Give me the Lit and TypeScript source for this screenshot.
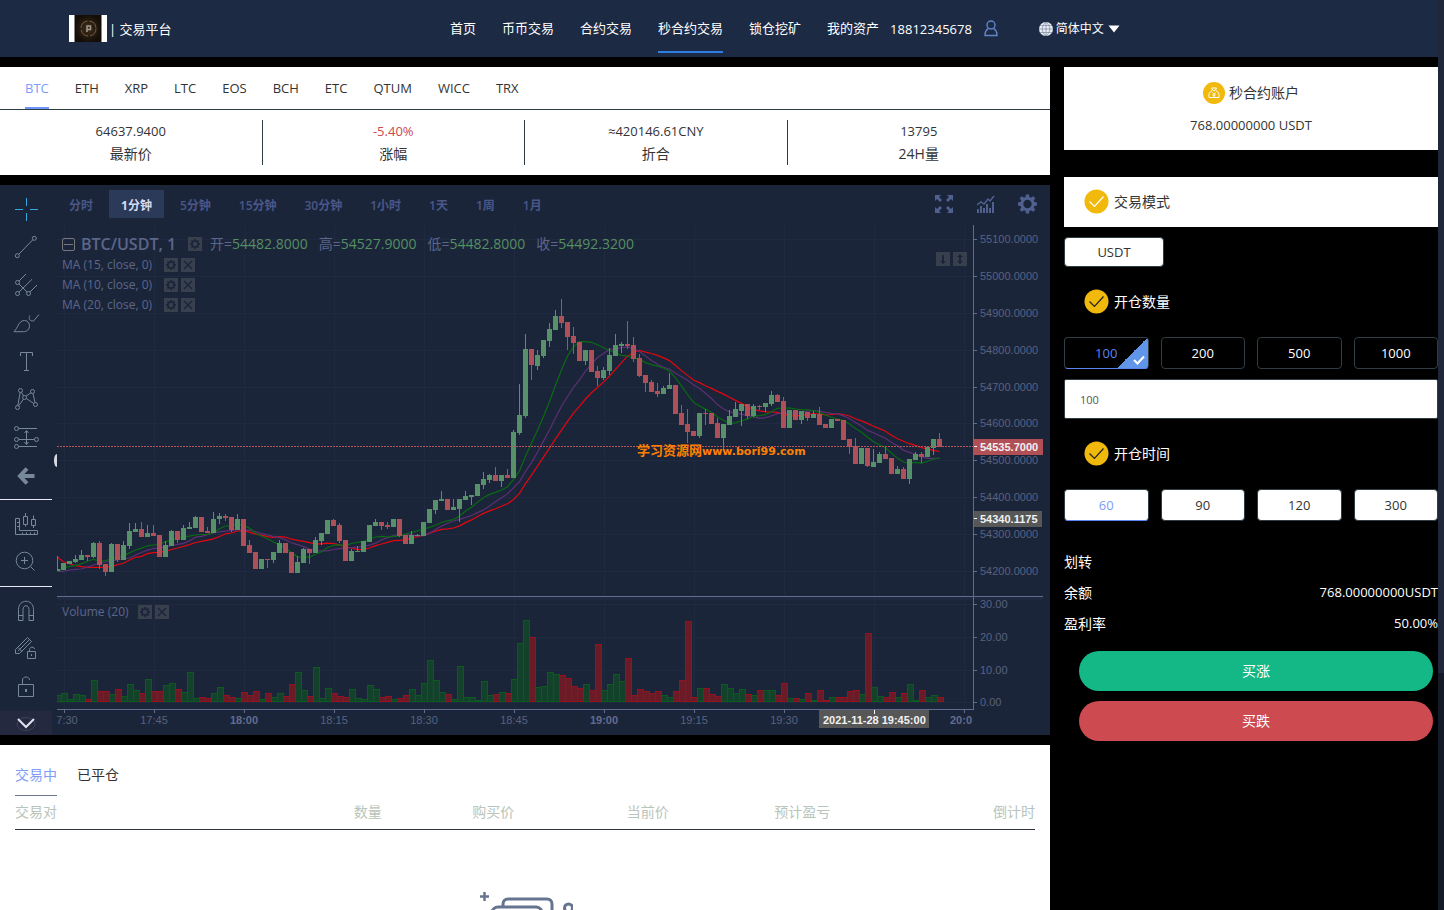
import { LitElement, html, svg, css } from 'lit';
import { customElement, property, state } from 'lit/decorators.js';
import { classMap } from 'lit/directives/class-map.js';

// u = up, d = down, followed by high, body top, body bottom, low.
// Values are ticks (3 per pixel) counted down from the base of each batch.
const BATCHES = [
  {
    base: 570,
    rows: `u258,297,302,302 u279,279,300,300 u272,273,281,282 u254,266,276,278 u239,255,269,270 d255,255,260,272
      u216,219,261,264 d213,219,284,297 d281,281,305,318 u219,222,305,305 d222,222,269,276 u213,225,269,269
      u159,183,227,236 u159,177,185,186 d156,177,200,201 u165,189,200,201 d165,189,197,198 d195,195,260,261
      u213,225,260,261 u180,183,227,227 d183,183,209,218 u165,174,209,210 u156,171,176,177 u138,141,173,174
      d141,141,185,186 d171,183,188,189 u126,147,188,189 u129,138,147,162 d132,138,143,153 d141,141,179,186
      u132,147,179,180 d147,147,227,228 d210,225,248,249 d246,246,296,297 u267,267,296,297 d267,267,269,294
      u246,246,269,279 u210,219,248,249 d219,219,248,249 d246,246,308,309 u258,276,308,309 u234,237,278,279
      d237,237,248,282 u201,210,248,249 u189,189,212,224 u150,150,191,192 d147,150,167,168 d159,165,212,218
      d210,210,272,273 u237,243,272,273 u228,243,245,246 u213,213,245,246`,
  },
  {
    base: 0,
    rows: `u735,735,785,786 u717,726,738,738 d726,726,738,750 d726,735,741,747 u717,717,741,741 d717,717,767,770
      d765,765,791,792 u753,765,791,792 u762,765,768,768 u726,726,767,768 u687,687,728,729 u660,660,690,702
      u633,657,663,663 d657,657,689,690 u657,681,689,690 u657,657,686,726 u633,648,659,660 u645,645,651,675
      u612,612,647,648 u576,597,614,627 u582,585,599,609 d561,585,602,603 u585,585,602,621 d567,585,593,594
      u450,456,593,594 u312,405,459,465 u162,207,407,414 d207,207,254,300 u210,225,257,270 u180,180,227,234
      u129,147,182,201 u90,108,149,150 d57,108,128,144 d126,126,170,210 d141,168,188,222 d186,186,242,243
      u210,210,242,255 d210,210,275,276 d258,273,293,318 u261,270,293,300 u204,225,272,285 u162,195,227,228
      u186,192,197,219 d123,192,197,207 d171,195,236,246 d222,234,287,291 d285,285,308,336 d300,306,335,336
      d309,333,341,351 u318,324,341,342 u279,315,326,327 d315,315,401,402 d375,399,434,435`,
  },
  {
    base: 60,
    rows: `d327,372,395,428 d393,393,407,408 u339,339,407,414 d327,339,341,375 d339,339,371,372 d354,369,413,414
      u372,372,413,453 u330,348,374,375 u306,327,350,351 u312,312,332,378 d312,312,347,357 u312,318,347,351
      d315,318,321,330 u309,309,320,335 u273,285,311,318 d282,285,305,306 d291,303,383,384 u330,330,383,384
      d330,330,359,360 u333,333,359,372 d335,335,353,362 u333,342,353,354 d321,342,374,375 d372,372,383,384
      u357,357,383,384 d357,357,362,363 d360,360,419,420 d417,417,440,462 d414,438,491,492 u444,444,491,492
      d444,444,497,500 u447,486,500,501 u456,462,488,489 d441,462,476,477 d474,474,521,522 u498,507,521,522
      d501,507,536,537 u477,477,536,552 u456,462,479,480 d456,462,470,489 u441,441,470,471 u417,417,443,465
      d399,417,440,440`,
  },
];

const VOLUMES = [
  19, 25, 5, 22, 19, 7, 64, 31, 31, 22, 37, 16, 52, 34, 25, 67, 31, 31, 49, 55, 37, 28, 88, 10, 13, 10, 25, 43, 19, 13,
  10, 28, 19, 31, 7, 25, 13, 25, 16, 52, 88, 34, 16, 103, 10, 40, 25, 16, 13, 37, 10, 7, 49, 37, 13, 16, 7, 10, 19, 37,
  19, 55, 124, 64, 28, 22, 7, 106, 13, 13, 4, 61, 19, 22, 28, 25, 67, 175, 244, 193, 43, 46, 88, 82, 79, 70, 46, 40, 52,
  34, 172, 34, 52, 82, 61, 130, 19, 37, 31, 25, 31, 19, 13, 31, 64, 241, 13, 40, 40, 22, 16, 52, 40, 25, 37, 22, 19, 34,
  34, 34, 19, 55, 10, 10, 7, 25, 4, 34, 4, 13, 13, 13, 31, 34, 22, 205, 43, 16, 13, 28, 13, 25, 52, 4, 34, 13, 19, 13,
];

interface Candle {
  up: boolean;
  high: number;
  top: number;
  bottom: number;
  low: number;
}

const CANDLES: Candle[] = BATCHES.flatMap(({ base, rows }) =>
  rows.trim().split(/\s+/).map(row => {
    const [high, top, bottom, low] = row.slice(1).split(',').map(v => Number(v) + base);
    return { up: row[0] === 'u', high, top, bottom, low };
  })
);

// The averages need values from before the first visible candle, so each one starts with a lead-in
const AVERAGES = [
  {
    period: 20,
    color: '#e4060f',
    lead: [832, 845, 851, 857, 860, 862, 862, 862, 861, 860, 854, 850, 840, 832, 829, 821, 818, 817, 814],
  },
  {
    period: 15,
    color: '#5d2f73',
    lead: [874, 874, 870, 868, 867, 861, 855, 849, 846, 843, 840, 837, 834, 825],
  },
  { period: 10, color: '#086b12', lead: [874, 865, 859, 856, 851, 844, 838, 843, 842] },
];

const PRICES = [
  ['55100.0000', 14], ['55000.0000', 51], ['54900.0000', 88], ['54800.0000', 125], ['54700.0000', 162],
  ['54600.0000', 198], ['54500.0000', 235], ['54400.0000', 272], ['54300.0000', 309], ['54200.0000', 346],
  ['30.00', 379], ['20.00', 412], ['10.00', 445], ['0.00', 477],
] as [string, number][];

// Label and its centre; the one under the time tag stays empty
const TIMES = [
  ['7:30', 10], ['17:45', 97], ['18:00', 187], ['18:15', 277], ['18:30', 367], ['18:45', 457],
  ['19:00', 547], ['19:15', 637], ['19:30', 727], ['', 817], ['20:0', 904],
] as [string, number][];

const tickY = (v: number) => Math.round(55 + v / 3);

const GEAR = svg`
  <path fill-rule="evenodd" d="M8.4 0h3.2l.5 2.7 1.6.7L16 1.8 18.2 4l-1.6 2.3.7 1.6 2.7.5v3.2l-2.7.5-.7 1.6
    1.6 2.3-2.2 2.2-2.3-1.6-1.6.7-.5 2.7H8.4l-.5-2.7-1.6-.7L4 18.2 1.8 16l1.6-2.3-.7-1.6L0 11.6V8.4l2.7-.5.7-1.6
    L1.8 4 4 1.8l2.3 1.6 1.6-.7zM10 5.6a4.4 4.4 0 1 0 0 8.8 4.4 4.4 0 0 0 0-8.8z"/>`;

const TOOLS: Record<string, unknown> = {
  cross: svg`<path d="M3 14.5h8M18 14.5h8M14.5 3v8M14.5 18v8"/>`,
  trend: svg`<circle cx="22.3" cy="5.3" r="2"/><circle cx="5.3" cy="22.7" r="2"/><path d="M6.8 21.2L20.8 6.8"/>`,
  fork: svg`<circle cx="5.5" cy="11.5" r="2"/><circle cx="5.5" cy="22.5" r="2"/><circle cx="16.5" cy="22.5" r="2"/>
    <path d="M7 10l7-7M7 21L20 8.3M18 21l7-7M7 13l8 8"/>`,
  brush: svg`<path d="M2 22.7C6 19 6.5 11.5 12.5 11.5c3 0 5 2.5 5 5.2 0 3.5-2.5 6-6 6z"/>
    <path d="M18 6.5c-2 3 0 6 3.5 5.5L27 5.5"/>`,
  text: svg`<path d="M8.5 9V5.5h12V9M14.5 5.5v18M12 23.5h5"/>`,
  pattern: svg`<circle cx="8.5" cy="5.5" r="2"/><circle cx="20.5" cy="6.5" r="2"/><circle cx="12.5" cy="12.5" r="2"/>
    <circle cx="5.5" cy="22.5" r="2"/><circle cx="23.5" cy="19.5" r="2"/>
    <path d="M5.8 20.5l2.4-13M9.5 7.3l2 3.5M14 11.2l5-3.5M21 8.5l2 9M6.7 20.8l4.7-6.6M14.3 13.5l7.5 5"/>`,
  forecast: svg`<circle cx="4.5" cy="5.5" r="2"/><circle cx="4.5" cy="16.5" r="2"/><circle cx="24.5" cy="16.5" r="2"/>
    <circle cx="4.5" cy="23.5" r="2"/>
    <path d="M6.5 5.5H25M6.5 16.5h16M6.5 23.5H25M14.5 8v13M12.5 10l2-2.5 2 2.5M12.5 19l2 2.5 2-2.5"/>`,
  back: svg`<path stroke-width="4" d="M15 7.5L8 15l7 7.5M9 15h13.5"/>`,
  ruler: svg`<path d="M3.5 8.5h4v12h18v4h-22zM5 12.5h2M5 16.5h2M10.5 22.5v2M14.5 22.5v2M18.5 22.5v2M22.5 22.5v2"/>
    <path d="M11.5 6.5h4v8h-4zM13.5 3v3.5M13.5 14.5v2M19.5 9.5h4v6h-4zM21.5 5.5v4M21.5 15.5v2.5"/>`,
  zoom: svg`<circle cx="12.5" cy="12.5" r="8.3"/><path d="M18.5 18.5l4 4M9 12.5h7M12.5 9v7"/>`,
  magnet: svg`<path d="M6.5 23.5v-11c0-11 15-11 15 0v11H17v-11c0-5-6-5-6 0v11zM6.5 18.5H11M17 18.5h4.5"/>`,
  pencil: svg`<path d="M3.5 14.5L15.5 2.5l4 4-12 12h-4zM6 12.5l4 4M6 16L17 5"/>
    <path d="M15.5 16.5h8v7h-8zM17.5 16.5v-2c0-3 5-3 5-.5M19.5 19v2"/>`,
  lock: svg`<path d="M6.5 11.5h15v12h-15zM10.5 11.5V7c0-4 7-4 7 0"/><path stroke-width="2" d="M14 16v3"/>`,
};

@customElement('market-chart')
export class MarketChart extends LitElement {
  @state() private period = '1分钟';

  static styles = css`
    :host {
      display: flex;
      background: #1b253a;
      color: #5c668a;
      font-size: 12px;
    }

    button {
      border: 0;
      padding: 0;
      background: none;
      color: inherit;
      font: inherit;
      cursor: pointer;
      display: flex;
      align-items: center;
      justify-content: center;
    }

    .tools {
      width: 52px;
      flex: none;
      display: flex;
      flex-direction: column;
      padding-top: 5px;
      color: #77879c;
      position: relative;
    }

    .tools__item {
      width: 52px;
      height: 38px;
    }

    .tools__item--active {
      color: #35a9de;
    }

    .tools__icon {
      width: 28px;
      height: 28px;
      fill: none;
      stroke: currentColor;
      stroke-width: 1;
    }

    .tools__line {
      height: 1px;
      margin: 5px 0;
      background: #e6ebf5;
    }

    .tools__more {
      height: 24px;
      margin-top: 5px;
      background: #242940;
      color: #dfe3ec;
    }

    .tools__collapse {
      position: absolute;
      right: -5px;
      top: 269px;
      width: 3px;
      height: 13px;
      background: #d5d8de;
      border-radius: 3px 0 0 3px / 6px 0 0 6px;
    }

    .body {
      flex: 1;
      min-width: 0;
      padding-left: 5px;
    }

    .bar {
      display: flex;
      align-items: flex-start;
      gap: 4px;
      height: 35px;
      padding-top: 5px;
    }

    .bar__period {
      height: 28px;
      padding: 3px 12px 0;
      color: #4a5788;
      line-height: 25px;
      font-weight: 600;
    }

    .bar__period--active {
      background: #2c3a5a;
      color: #d5dcf0;
      font-weight: 700;
    }

    .bar__actions {
      margin-left: auto;
      padding: 4px 13px 0 0;
      display: flex;
      gap: 23px;
      color: #50608f;
      fill: currentColor;
    }

    .plot {
      position: relative;
    }

    .plot__canvas {
      display: block;
      width: 100%;
      height: auto;
      font: 11px 'Liberation Sans', Arial, sans-serif;
    }

    .plot__label {
      fill: #58617f;
    }

    .plot__label--strong {
      font-weight: 700;
      fill: #626c8e;
    }

    .plot__tag {
      fill: #f2f2f2;
      font-weight: 700;
    }

    .plot__watermark {
      fill: #ff8000;
      font: 700 13px 'DejaVu Sans', 'Noto Sans CJK SC', sans-serif;
    }

    .plot__site {
      font-size: 11px;
    }

    .legend {
      position: absolute;
      left: 5px;
      top: 8px;
      line-height: 20px;
    }

    .legend--volume {
      top: 377px;
    }

    .legend__row {
      display: flex;
      align-items: center;
      gap: 3px;
    }

    .legend__label {
      margin-right: 9px;
    }

    .legend--volume .legend__label {
      margin-right: 6px;
    }

    .legend__row--title {
      height: 22px;
    }

    .legend__fold {
      width: 13px;
      height: 13px;
      border: 1px solid #77777c;
      border-radius: 2px;
      box-sizing: border-box;
      margin-right: 3px;
    }

    .legend__fold::before {
      content: '';
      width: 9px;
      height: 1px;
      background: #77777c;
    }

    .legend__title {
      font-size: 16px;
      font-weight: 600;
      margin-right: 9px;
    }

    .legend__ohlc {
      font-size: 14px;
      margin: 0 3px 0 5px;
    }

    .legend__ohlc b {
      color: #558f62;
      font-weight: 400;
    }

    .mini {
      width: 14px;
      height: 14px;
      background: #383f4d;
      color: #1b253a;
      fill: currentColor;
    }

    .plot__moves {
      position: absolute;
      right: 83px;
      top: 27px;
      display: flex;
      gap: 3px;
    }
  `;

  private tool(name: string, label: string) {
    return html`
      <button class="tools__item ${classMap({ 'tools__item--active': name === 'cross' })}" aria-label=${label}>
        <svg class="tools__icon" viewBox="0 0 28 28">${TOOLS[name]}</svg>
      </button>
    `;
  }

  private mini(kind: string) {
    const icons: Record<string, unknown> = {
      gear: svg`<svg viewBox="0 0 20 20" x="2" y="2" width="10" height="10">${GEAR}</svg>`,
      close: svg`<path d="M3 3l8 8M11 3l-8 8" stroke="currentColor" stroke-width="1.5"/>`,
      down: svg`<path d="M6 3h2v6h2l-3 3-3-3h2z"/>`,
      both: svg`<path d="M6 5H4l3-3 3 3H8v4h2l-3 3-3-3h2z"/>`,
    };
    return html`<button class="mini" aria-label=${kind}><svg width="14" height="14">${icons[kind]}</svg></button>`;
  }

  private candle(c: Candle, i: number) {
    const top = tickY(c.top);
    const high = tickY(c.high);
    return svg`
      <g fill=${c.up ? '#58906a' : '#ad5057'}>
        <rect x=${i * 6} y=${high} width="1" height=${Math.max(1, tickY(c.low) - high)} />
        <rect x=${i * 6 - 2} y=${top} width="5" height=${Math.max(1, tickY(c.bottom) - top)} />
      </g>
    `;
  }

  private volume(v: number, i: number) {
    const h = Math.round(v / 3);
    const up = CANDLES[i]?.up;
    return svg`
      <rect x=${i * 6 - 1.5} y=${476.5 - h} width="6" height=${h}
        fill=${up ? '#12432a' : '#6b1a26'} stroke=${up ? '#0c5a1c' : '#97101c'} />
    `;
  }

  private average(period: number, lead: number[]) {
    const closes = CANDLES.map(c => (c.up ? c.top : c.bottom));
    return closes
      .map((_, i) => {
        const value = i < period - 1
          ? lead[i]
          : closes.slice(i - period + 1, i + 1).reduce((a, b) => a + b, 0) / period;
        return `${i * 6 + 0.5},${(55 + value / 3).toFixed(1)}`;
      })
      .join(' ');
  }

  private renderPlot() {
    return html`
      <svg class="plot__canvas" viewBox="0 0 993 510">
        <g stroke="#1f2940">
          ${PRICES.map(([, y]) => svg`<path d="M0 ${y + 0.5}H916" />`)}
          ${TIMES.map((_, i) => svg`<path d="M${i * 90 + 7.5} 0V484" />`)}
        </g>
        <rect y="372" width="986" height="3" fill="#1f2940" />
        <svg width="916" height="510">
          <g shape-rendering="crispEdges">${VOLUMES.map((v, i) => this.volume(v, i))}</g>
          <g fill="none" stroke-width="1.2">
            ${AVERAGES.map(a => svg`<polyline points=${this.average(a.period, a.lead)} stroke=${a.color} />`)}
          </g>
          <g shape-rendering="crispEdges">${CANDLES.map((c, i) => this.candle(c, i))}</g>
        </svg>
        <g text-anchor="middle">
          ${TIMES.filter(([t]) => t).map(([t, x]) => svg`
            <text class="plot__label ${/:00?$/.test(t) ? 'plot__label--strong' : ''}" x=${x} y="499">${t}</text>
          `)}
        </g>
        <path d="M0 221.5H916" stroke="#b8535a" stroke-dasharray="2 1" />
        <text class="plot__watermark" x="580" y="230">学习资源网<tspan class="plot__site">www.bori99.com</tspan></text>
        <g stroke="#626c8e" fill="none" shape-rendering="crispEdges">
          <path d="M0 371.5H986M916.5 0V484.5M0 484.5H917" />
          ${PRICES.map(([, y]) => svg`<path d="M917 ${y + 0.5}h3" />`)}
          ${TIMES.map((_, i) => svg`<path d="M${i * 90 + 7.5} 485v3" />`)}
        </g>
        ${PRICES.map(([label, y]) => svg`<text class="plot__label" x="923" y=${y + 4}>${label}</text>`)}
        <rect x="917" y="214" width="69" height="16" fill="#b04f56" />
        <text class="plot__tag" x="923" y="226">54535.7000</text>
        <rect x="917" y="286" width="68" height="16" fill="#575757" />
        <text class="plot__tag" x="923" y="298">54340.1175</text>
        <rect x="762" y="485" width="110" height="18" fill="#575757" />
        <text class="plot__tag" x="766" y="499">2021-11-28 19:45:00</text>
        <path d="M817.5 485v4M917 221.5h3M917 293.5h3" stroke="#fff" />
      </svg>
    `;
  }

  render() {
    const periods = ['分时', '1分钟', '5分钟', '15分钟', '30分钟', '1小时', '1天', '1周', '1月'];
    const prices = [['开', '54482.8000'], ['高', '54527.9000'], ['低', '54482.8000'], ['收', '54492.3200']];
    return html`
      <div class="tools">
        ${this.tool('cross', '十字线')} ${this.tool('trend', '趋势线')} ${this.tool('fork', '叉形')}
        ${this.tool('brush', '画笔')} ${this.tool('text', '文本')} ${this.tool('pattern', '形态')}
        ${this.tool('forecast', '预测')} ${this.tool('back', '返回')}
        <div class="tools__line"></div>
        ${this.tool('ruler', '测量')} ${this.tool('zoom', '放大')}
        <div class="tools__line"></div>
        ${this.tool('magnet', '磁铁')} ${this.tool('pencil', '绘图模式')} ${this.tool('lock', '锁定')}
        <button class="tools__more" aria-label="更多">
          <svg width="20" height="20" fill="none" stroke="currentColor">
            <ellipse cx="10" cy="11" rx="9" ry="6.5" stroke="#3d435a" />
            <path d="M2 6l8 8 8-8" stroke-width="2" />
          </svg>
        </button>
        <div class="tools__collapse"></div>
      </div>
      <div class="body">
        <div class="bar">
          ${periods.map(p => html`
            <button
              class=${classMap({ bar__period: true, 'bar__period--active': p === this.period })}
              @click=${() => (this.period = p)}
            >${p}</button>
          `)}
          <div class="bar__actions">
            <button aria-label="全屏">
              <svg width="20" height="20" viewBox="0 0 20 20">
                <path d="M1 1h6L5 3l3 3-2 2-3-3-2 2zM19 1v6l-2-2-3 3-2-2 3-3-2-2zM1 19v-6l2 2 3-3 2 2-3 3 2 2zM19 19h-6l2-2-3-3 2-2 3 3 2-2z" />
              </svg>
            </button>
            <button aria-label="指标">
              <svg width="18" height="20" viewBox="0 0 18 20">
                <path d="M0 15h2v4H0zM3 12h2v7H3zM6 14h2v5H6zM9 10h2v9H9zM12 14h2v5h-2zM15 8h2v11h-2z" />
                <path d="M0 11l4-3 3 2 4-5 2 2 4-5" fill="none" stroke="currentColor" stroke-width="1.5" />
              </svg>
            </button>
            <button aria-label="设置"><svg width="19" height="20" viewBox="0 0 20 20">${GEAR}</svg></button>
          </div>
        </div>
        <div class="plot">
          ${this.renderPlot()}
          <div class="legend">
            <div class="legend__row legend__row--title">
              <button class="legend__fold" aria-label="收起"></button>
              <span class="legend__title">BTC/USDT, 1</span>
              ${this.mini('gear')}
              ${prices.map(([k, v]) => html`<span class="legend__ohlc">${k}=<b>${v}</b></span>`)}
            </div>
            ${[15, 10, 20].map(n => html`
              <div class="legend__row">
                <span class="legend__label">MA (${n}, close, 0)</span>${this.mini('gear')}${this.mini('close')}
              </div>
            `)}
          </div>
          <div class="legend legend--volume">
            <div class="legend__row">
              <span class="legend__label">Volume (20)</span>${this.mini('gear')}${this.mini('close')}
            </div>
          </div>
          <div class="plot__moves">${this.mini('down')}${this.mini('both')}</div>
        </div>
      </div>
    `;
  }
}

@customElement('order-panel')
export class OrderPanel extends LitElement {
  @property({ type: String }) balance = '768.00000000';
  @state() private amount = 100;
  @state() private seconds = 60;

  static styles = css`
    :host {
      display: block;
      color: #fff;
    }

    .card {
      background: #fff;
      color: #333;
    }

    .card--account {
      padding: 10px 0 9px;
      margin-bottom: 27px;
      text-align: center;
      line-height: 32px;
    }

    .account__name {
      display: flex;
      align-items: center;
      justify-content: center;
      gap: 4px;
    }

    .num {
      font-size: 13px;
    }

    .title {
      box-sizing: border-box;
      display: flex;
      align-items: center;
      gap: 5px;
      height: 70px;
      padding: 0 0 2px 20px;
    }

    .title--card {
      height: 50px;
      margin-bottom: 10px;
    }

    button {
      font: inherit;
      font-size: 13px;
      cursor: pointer;
    }

    .option {
      height: 32px;
      padding: 0;
      border: 1px solid #2f3d45;
      border-radius: 4px;
      background: #000;
      color: #fff;
    }

    .option--light {
      background: #fff;
      color: #333;
    }

    .option--mode {
      width: 100px;
      height: 30px;
    }

    .option--active {
      color: #5b84f0;
      border-bottom-color: #5b84f0;
    }

    .option--light.option--active {
      color: #7f9cfb;
    }

    .option--ticked {
      background: linear-gradient(135deg, transparent 50%, #6095ea 50%) right bottom / 31px 31px no-repeat #000;
      position: relative;
    }

    .option__tick {
      position: absolute;
      right: 3px;
      bottom: 3px;
    }

    .options {
      display: grid;
      grid-template-columns: repeat(4, 1fr);
      gap: 12px;
    }

    .amount {
      display: block;
      box-sizing: border-box;
      width: 100%;
      height: 40px;
      margin-top: 10px;
      padding: 0 15px;
      border: 1px solid #2f3d45;
      border-radius: 2px;
      background: #fff;
      color: #555;
      font: inherit;
      font-size: 11px;
    }

    .facts {
      margin: 25px 0 12px;
      line-height: 31px;
    }

    .facts__row {
      display: flex;
      justify-content: space-between;
    }

    .submit {
      display: block;
      width: calc(100% - 20px);
      height: 40px;
      margin: 0 5px 10px 15px;
      padding: 0 0 2px;
      border: 0;
      border-radius: 20px;
      color: #fff;
      font-size: 14px;
    }

    .submit--up {
      background: #14b887;
    }

    .submit--down {
      background: #cc4a50;
    }
  `;

  private check(stroke: string) {
    return html`
      <svg width="25" height="25" viewBox="0 0 25 25">
        <circle cx="12.5" cy="12.5" r="12" fill="#f0b90b" />
        <path d="M5.5 12.5l5 5 9-10" fill="none" stroke=${stroke} stroke-width="1.2" />
      </svg>
    `;
  }

  render() {
    return html`
      <div class="card card--account">
        <div class="account__name">
          <svg width="22" height="22" viewBox="0 0 22 22">
            <circle cx="11" cy="11" r="11" fill="#f0b90b" />
            <path
              d="M8.5 6h5L12 8.5h-2zM9 8.5c-3 2-3.5 4-3 7h10c.5-3 0-5-3-7M9.5 10.5l1.5 2 1.5-2M11 12.5v3M9.5 13h3"
              fill="none" stroke="#fff" stroke-width="1"
            />
          </svg>
          <span>秒合约账户</span>
        </div>
        <div class="num">${this.balance} USDT</div>
      </div>
      <div class="card title title--card">${this.check('#fff')}<span>交易模式</span></div>
      <button class="option option--light option--mode">USDT</button>

      <div class="title">${this.check('#222')}<label for="amount">开仓数量</label></div>
      <div class="options">
        ${[100, 200, 500, 1000].map(n => {
          const on = n === this.amount;
          return html`
            <button
              class=${classMap({ option: true, 'option--active': on, 'option--ticked': on })}
              @click=${() => (this.amount = n)}
            >
              ${n}
              ${on
                ? html`<svg class="option__tick" width="12" height="10" viewBox="0 0 12 10">
                    <path d="M1 5l3.500 3.500L11 1.500" fill="none" stroke="#fff" stroke-width="2" />
                  </svg>`
                : ''}
            </button>
          `;
        })}
      </div>
      <input class="amount" id="amount" type="text" .value=${String(this.amount)} />

      <div class="title">${this.check('#222')}<span>开仓时间</span></div>
      <div class="options">
        ${[60, 90, 120, 300].map(n => html`
          <button
            class=${classMap({ option: true, 'option--light': true, 'option--active': n === this.seconds })}
            @click=${() => (this.seconds = n)}
          >${n}</button>
        `)}
      </div>

      <div class="facts">
        <div class="facts__row"><span>划转</span></div>
        <div class="facts__row"><span>余额</span><span class="num">${this.balance}USDT</span></div>
        <div class="facts__row"><span>盈利率</span><span class="num">50.00%</span></div>
      </div>
      <button class="submit submit--up">买涨</button>
      <button class="submit submit--down">买跌</button>
    `;
  }
}

@customElement('app-root')
export class AppRoot extends LitElement {
  @state() private coin = 'BTC';

  static styles = css`
    :host {
      display: flex;
      height: 100vh;
      overflow: hidden;
      background: #000;
      color: #333;
      font: 14px 'Open Sans', 'Noto Sans CJK SC', sans-serif;
    }

    a {
      color: inherit;
      text-decoration: none;
    }

    .page {
      flex: 1;
      min-width: 0;
      display: flex;
      flex-direction: column;
    }

    .scroll {
      width: 6px;
      background: #151a28;
    }

    .scroll__thumb {
      height: 74%;
      background: #20273b;
    }

    .header {
      height: 57px;
      flex: none;
      display: flex;
      align-items: center;
      padding: 0 69px;
      background: #1c2a44;
      color: #fff;
      font-size: 13px;
    }

    .brand {
      display: flex;
      align-items: center;
      gap: 2px;
      width: 381px;
      flex: none;
    }

    .nav {
      display: flex;
      gap: 26px;
    }

    .nav__link {
      line-height: 45px;
      padding: 2px 0 0;
      border-bottom: 2px solid transparent;
    }

    .nav__link--active {
      border-color: #2f7de0;
    }

    .user {
      display: flex;
      align-items: center;
      gap: 12px;
      margin: 0 41px 0 11px;
    }

    .lang {
      display: flex;
      align-items: center;
      gap: 3px;
    }

    .lang__select {
      appearance: none;
      border: 0;
      padding: 0;
      background: none;
      color: inherit;
      font: inherit;
      font-size: 12px;
    }

    .main {
      flex: 1;
      min-height: 0;
      display: grid;
      grid-template-columns: 1050fr 374fr;
      gap: 14px;
      margin-top: 10px;
    }

    .left {
      display: flex;
      flex-direction: column;
      gap: 10px;
      min-width: 0;
      min-height: 0;
    }

    .left > * {
      flex: none;
    }

    .quotes {
      background: #fff;
    }

    .coins {
      display: flex;
      gap: 26px;
      padding: 0 25px;
      border-bottom: 1px solid #2f3d45;
    }

    .coins__tab {
      height: 42px;
      padding: 2px 0 0;
      border: 0;
      border-bottom: 2px solid transparent;
      background: none;
      color: inherit;
      font: inherit;
      font-size: 13px;
      cursor: pointer;
    }

    .coins__tab--active {
      color: #7f9cfb;
      border-color: #6d95fb;
    }

    .stats {
      display: grid;
      grid-template-columns: repeat(4, 1fr);
      padding: 10px 0;
      text-align: center;
      line-height: 24px;
    }

    .stats__item {
      height: 45px;
      border-right: 1px solid #2f3d45;
    }

    .stats__item:last-child {
      border: 0;
    }

    .stats__value {
      font-size: 13px;
      line-height: 22px;
    }

    .stats__value--down {
      color: #cc4a50;
    }

    .left .orders {
      flex: 1;
      min-height: 0;
      overflow: hidden;
      padding: 10px 15px 0;
      background: #fff;
    }

    .orders__tabs {
      display: flex;
      gap: 20px;
    }

    .orders__tab {
      height: 41px;
      padding: 0 0 2px;
      border: 0;
      border-bottom: 1px solid transparent;
      background: none;
      color: inherit;
      font: inherit;
    }

    .orders__tab--active {
      color: #7f9cfb;
      border-color: #6d7790;
    }

    .orders__table {
      width: 100%;
      table-layout: fixed;
      border-collapse: collapse;
      color: #b9c4bb;
    }

    .orders__table th {
      box-sizing: border-box;
      height: 33px;
      padding: 0 0 2px;
      border-bottom: 1px solid #2f3540;
      font-weight: 400;
    }

    .orders__table th:nth-child(1) {
      width: 290px;
      text-align: left;
    }

    .orders__table th:nth-child(4) {
      width: 18%;
    }

    .orders__table th:last-child {
      width: 170px;
      text-align: right;
    }

    .orders__empty {
      display: block;
      margin: 60px auto 0;
      fill: none;
      stroke: #66748f;
      stroke-width: 3;
    }
  `;

  render() {
    const links = ['首页', '币币交易', '合约交易', '秒合约交易', '锁仓挖矿', '我的资产'];
    const coins = ['BTC', 'ETH', 'XRP', 'LTC', 'EOS', 'BCH', 'ETC', 'QTUM', 'WICC', 'TRX'];
    const stats = [['64637.9400', '最新价'], ['-5.40%', '涨幅'], ['≈420146.61CNY', '折合'], ['13795', '24H量']];
    const columns = ['交易对', '数量', '购买价', '当前价', '预计盈亏', '倒计时'];
    return html`
      <div class="page">
        <header class="header">
          <a class="brand" href="#">
            <svg width="38" height="27" viewBox="0 0 38 27">
              <defs>
                <radialGradient id="glow"><stop stop-color="#40301c" /><stop offset="1" stop-color="#150e08" /></radialGradient>
              </defs>
              <rect width="38" height="27" fill="#fff" />
              <rect x="5" width="28" height="27" fill="#888" />
              <rect x="6" width="26" height="27" fill="url(#glow)" />
              <circle cx="19.5" cy="13.5" r="7.5" fill="none" stroke="#7a5c42" stroke-dasharray="10 2" />
              <path d="M18 17v-6h3.500v3.500H18" fill="none" stroke="#a39a90" stroke-width="1.5" />
            </svg>
            <span>| 交易平台</span>
          </a>
          <nav class="nav">
            ${links.map(l => html`
              <a href="#" class=${classMap({ nav__link: true, 'nav__link--active': l === '秒合约交易' })}>${l}</a>
            `)}
          </nav>
          <div class="user">
            <span>18812345678</span>
            <svg width="14" height="17" viewBox="0 0 14 17" fill="none" stroke="#5f86c9" stroke-width="1.4">
              <circle cx="7" cy="5" r="4" />
              <path d="M4.5 8.500C1.5 10 1 12 1 15.500h12c0-3.500-.5-5.500-3.500-7" />
            </svg>
          </div>
          <div class="lang">
            <svg width="14" height="14" viewBox="0 0 14 14">
              <circle cx="7" cy="7" r="7" fill="#e9edf4" />
              <path d="M7 0v14M0 7h14M1 3.500h12M1 10.500h12M7 0c-5 4-5 10 0 14M7 0c5 4 5 10 0 14" fill="none" stroke="#7b879e" stroke-width=".7" />
            </svg>
            <select class="lang__select" aria-label="语言"><option>简体中文</option></select>
            <svg width="12" height="8"><path d="M.5.5h11L6 7.500z" fill="#fff" /></svg>
          </div>
        </header>

        <main class="main">
          <div class="left">
            <section class="quotes">
              <div class="coins">
                ${coins.map(c => html`
                  <button
                    class=${classMap({ coins__tab: true, 'coins__tab--active': c === this.coin })}
                    @click=${() => (this.coin = c)}
                  >${c}</button>
                `)}
              </div>
              <div class="stats">
                ${stats.map(([value, label]) => html`
                  <div class="stats__item">
                    <div class="stats__value ${classMap({ 'stats__value--down': value.startsWith('-') })}">${value}</div>
                    <div>${label}</div>
                  </div>
                `)}
              </div>
            </section>

            <market-chart></market-chart>

            <section class="orders">
              <div class="orders__tabs">
                <button class="orders__tab orders__tab--active">交易中</button>
                <button class="orders__tab">已平仓</button>
              </div>
              <table class="orders__table">
                <thead><tr>${columns.map(c => html`<th>${c}</th>`)}</tr></thead>
              </table>
              <svg class="orders__empty" width="95" height="70" viewBox="0 0 95 70">
                <path d="M6.5 2v9M2 6.500h9" stroke-width="2.5" />
                <path d="M25 16v-2c0-3 2-5 5-5h39c3 0 5 2 5 5v36c0 3-2 5-5 5h-5" />
                <rect x="14" y="17" width="50" height="48" rx="6" />
                <circle cx="90.5" cy="18" r="4" />
              </svg>
            </section>
          </div>
          <order-panel></order-panel>
        </main>
      </div>
      <div class="scroll"><div class="scroll__thumb"></div></div>
    `;
  }
}
